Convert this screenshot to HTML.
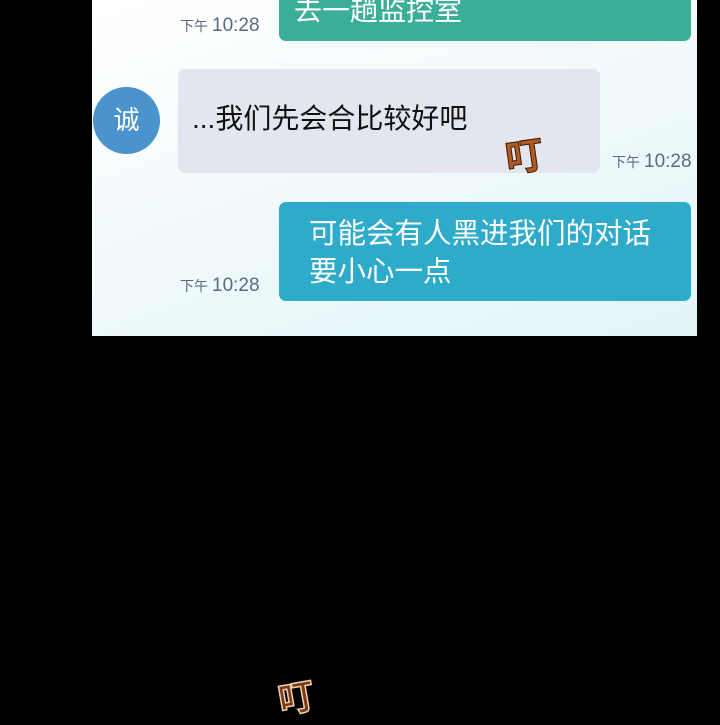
<!DOCTYPE html>
<html><head><meta charset="utf-8"><style>
body{margin:0;width:720px;height:700px;background:#000;position:relative;overflow:hidden;font-family:"Liberation Sans","Noto Sans CJK SC",sans-serif}
.panel{position:absolute;left:92px;top:0;width:605px;height:336px;background:linear-gradient(160deg,#ffffff 0%,#f2fafc 50%,#dff4f7 100%)}
.b{position:absolute;border-radius:7px}
.t{position:absolute;color:#5a6a85;font-size:19px}
.t small{font-size:14px;margin-right:4px}
</style></head><body>
<div class="panel"></div>
<div class="b" style="left:279px;top:-10px;width:412px;height:51px;background:#3aae98;color:#fff;font-size:28px;line-height:28px;padding-left:15px;box-sizing:border-box;"><div style="margin-top:7px">去一趟监控室</div></div>
<div class="t" style="left:180px;top:15px"><small>下午</small>10:28</div>
<div style="position:absolute;left:93px;top:87px;width:67px;height:67px;border-radius:50%;background:#4b93cc;color:#fff;font-size:26px;text-align:center;line-height:66px">诚</div>
<div class="b" style="left:178px;top:69px;width:422px;height:104px;background:#e3e6ee;color:#111;font-size:28px;line-height:104px;padding-left:14px;box-sizing:border-box"><div style="margin-top:-2px">...我们先会合比较好吧</div></div>
<div style="position:absolute;left:505px;top:126px;color:#b05a20;font-size:38px;font-weight:bold;transform:rotate(-8deg);-webkit-text-stroke:1px #3a1a08">叮</div>
<div class="t" style="left:612px;top:151px"><small>下午</small>10:28</div>
<div class="b" style="left:279px;top:202px;width:412px;height:99px;background:#2eaacb;color:#fff;font-size:28.5px;line-height:38px;padding:13px 0 0 30px;box-sizing:border-box">可能会有人黑进我们的对话<br>要小心一点</div>
<div class="t" style="left:180px;top:275px"><small>下午</small>10:28</div>
<div style="position:absolute;left:278px;top:670px;color:#7a3a18;font-size:36px;font-weight:bold;transform:rotate(-10deg);-webkit-text-stroke:1.5px #f0d0b0">叮</div>
</body></html>
